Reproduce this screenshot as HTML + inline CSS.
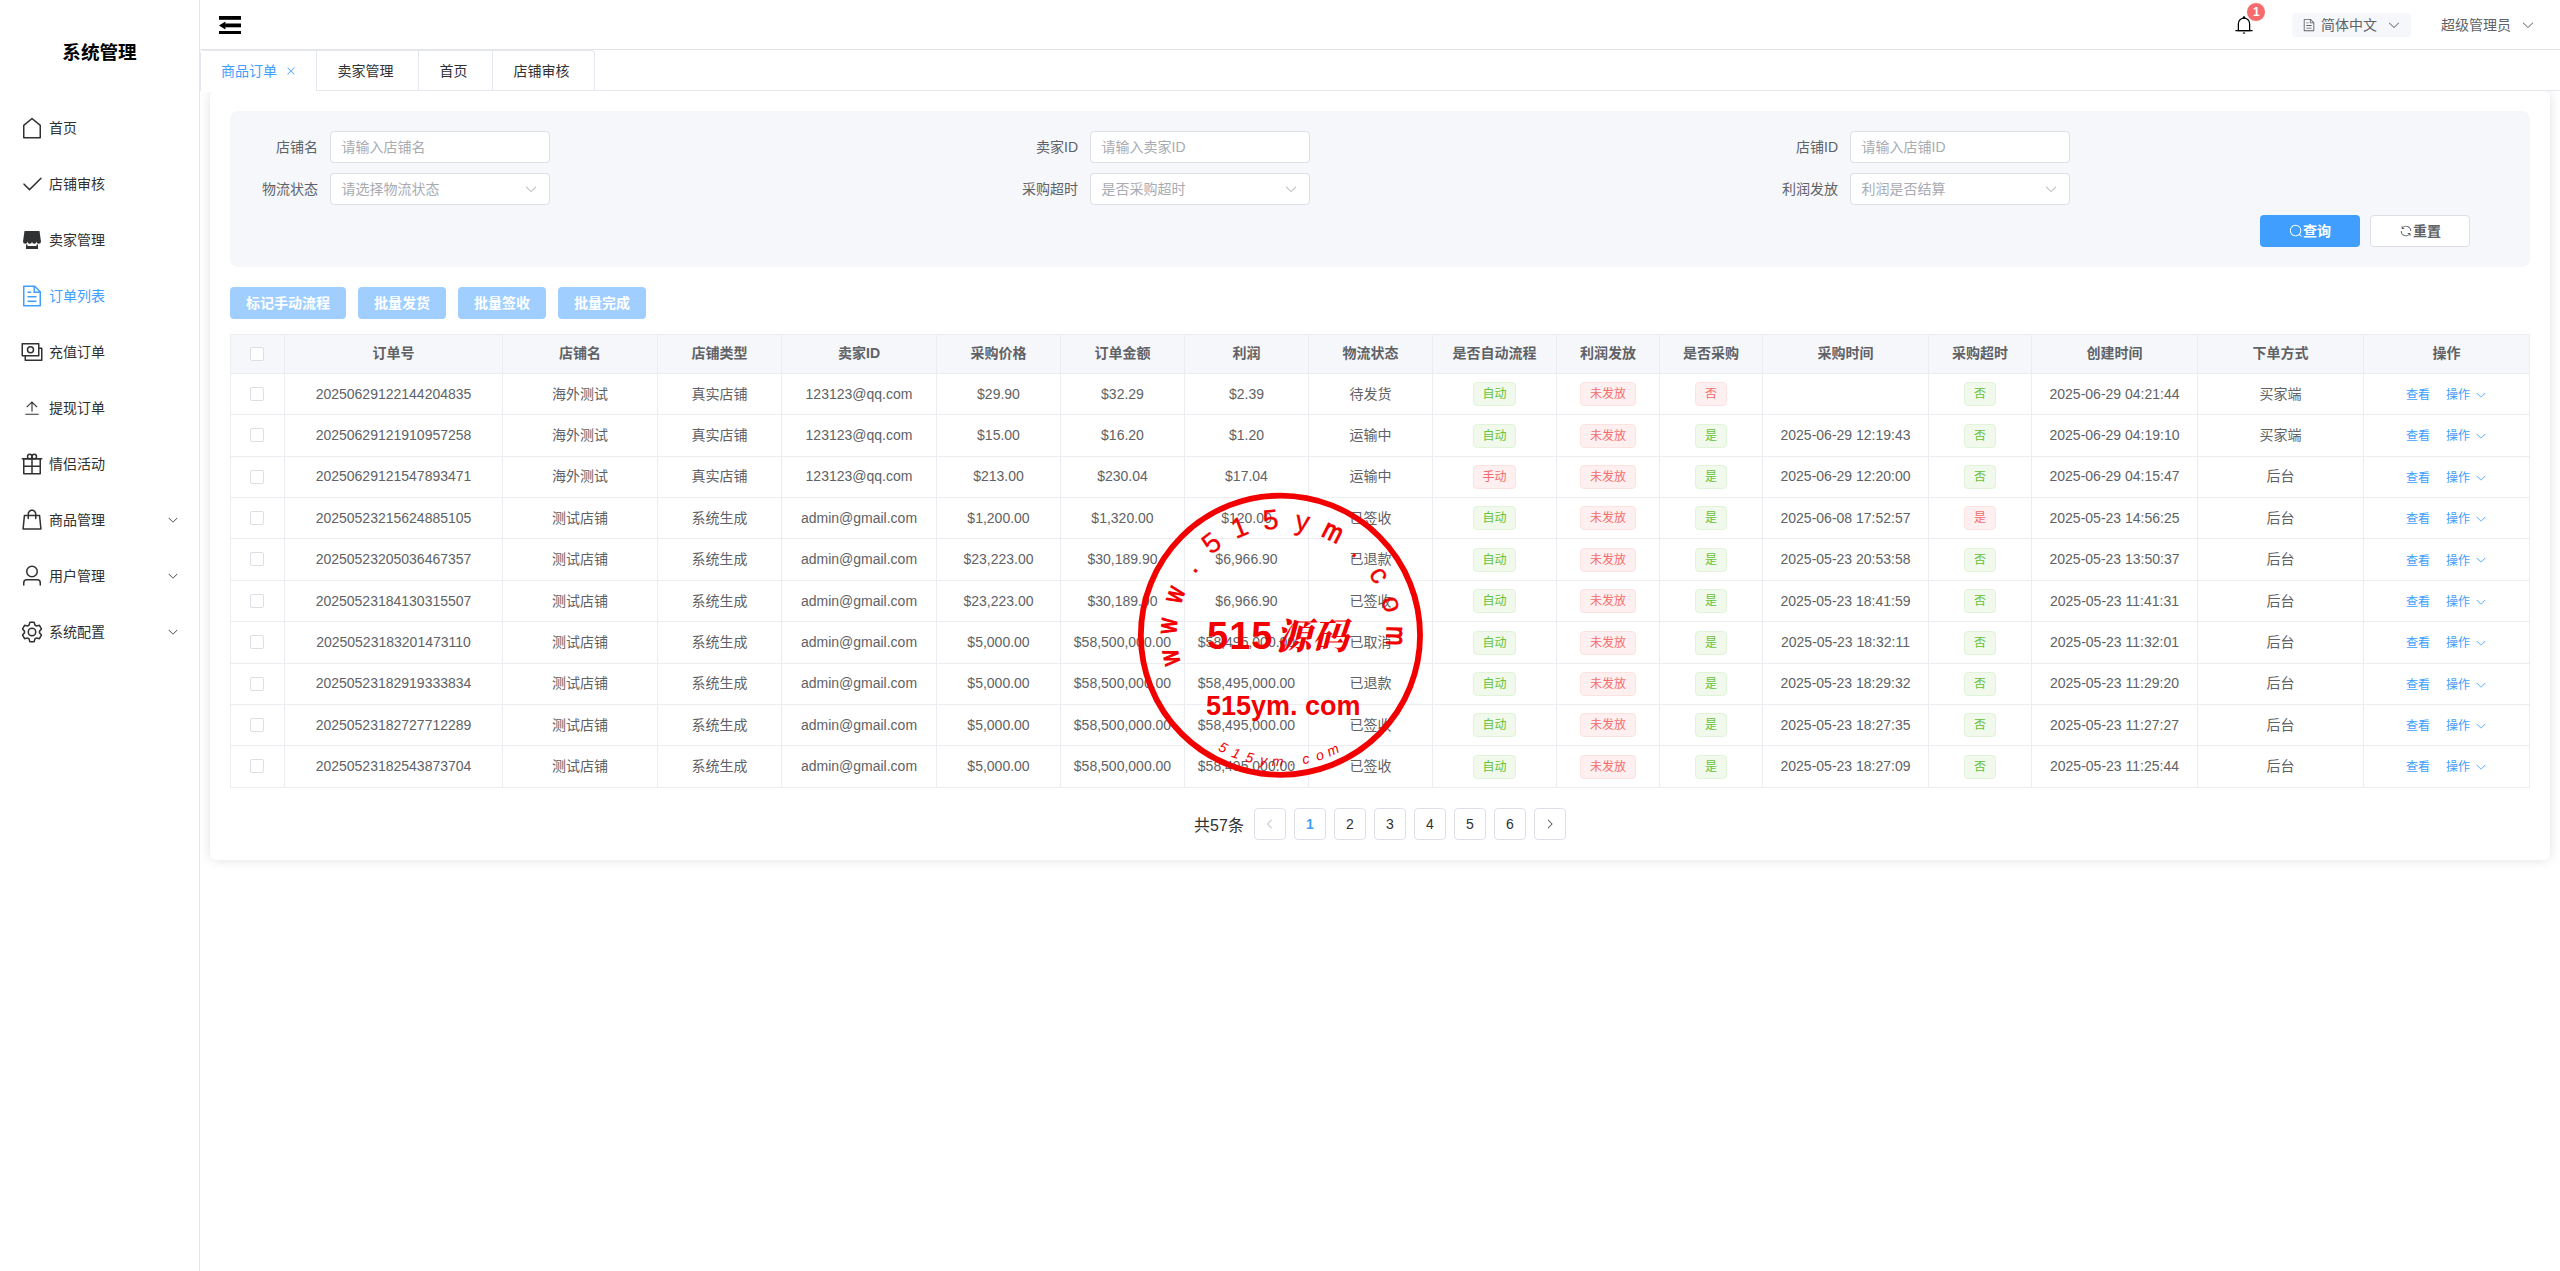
<!DOCTYPE html>
<html lang="zh-CN"><head><meta charset="utf-8"><title>系统管理</title>
<style>
*{box-sizing:border-box;margin:0;padding:0}
html,body{width:2560px;height:1271px;overflow:hidden;background:#fff}
body{position:relative;font-family:"Liberation Sans","Noto Sans CJK SC",sans-serif;font-size:14px;color:#303133}
.ic{fill:currentColor;display:inline-block;vertical-align:middle;flex:none}
/* sidebar */
.side{position:absolute;left:0;top:0;width:200px;height:1271px;border-right:1px solid #e6e6e6;z-index:3;background:#fff}
.logo{position:absolute;left:0;top:35px;width:199px;height:36px;line-height:36px;text-align:center;font-size:18.6px;font-weight:700;color:#000}
.mi{position:absolute;left:0;width:199px;height:56px;line-height:56px;color:#303133;font-size:14px}
.mi .mic{position:absolute;left:20px;top:16px}
.mi span{position:absolute;left:49px;top:0}
.mi .marr{position:absolute;left:167px;top:22px}
.mi.act{color:#409eff}
/* header */
.head{position:absolute;left:200px;top:0;width:2360px;height:50px;border-bottom:1px solid #e2e4e8;z-index:3;background:#fff}
.fold{position:absolute;left:18.6px;top:15.6px;width:22.6px;height:18.8px;fill:#000}
.bell{position:absolute;left:2033.8px;top:14.8px;width:20px;height:20px;color:#000}
.bell .ic{position:absolute;left:0;top:0}
.badge{position:absolute;left:12.5px;top:-12.8px;width:20px;height:20px;border-radius:10px;background:#f56c6c;border:1px solid #fff;color:#fff;font-size:12px;font-weight:700;line-height:18px;text-align:center}
.lang{position:absolute;left:2092px;top:13px;width:119px;height:24px;border-radius:4px;background:#f5f7fa;color:#606266;line-height:24px}
.lang .ldoc{position:absolute;left:10px;top:5px}
.lang span{position:absolute;left:29px;top:0}
.lang .larr{position:absolute;left:95px;top:5px}
.admin{position:absolute;left:2241px;top:13px;height:24px;line-height:24px;color:#606266}
.admin .aarr{position:absolute;left:80px;top:5px}
/* tabs */
.tabs{position:absolute;left:200px;top:50px;width:2360px;height:41px;border-bottom:1px solid #e4e7ed;background:#fff;z-index:2}
.tabwrap{position:absolute;left:0;top:0;height:41px;display:flex;border:1px solid #e4e7ed;border-bottom:none;border-radius:4px 4px 0 0}
.tab{height:40px;line-height:40px;padding:0 4px 0 0;text-align:center;border-left:1px solid #e4e7ed;color:#303133;font-size:14px;white-space:nowrap}
.tab:first-child{border-left:none}
.tab.on{color:#409eff;padding:0 0 0 20px;text-align:left;background:#fff;height:41px;border-bottom:1px solid #fff}
.tab .tclose{margin-left:8px;position:relative;top:-1px}
/* card */
.card{position:absolute;left:210px;top:91px;width:2340px;height:769px;background:#fff;border-radius:6px;box-shadow:0 0 12px rgba(0,0,0,.12)}
.filter{position:absolute;left:20px;top:20px;width:2300px;height:156px;background:#f5f7fa;border-radius:8px}
.lbl{position:absolute;width:130px;height:32px;line-height:32px;text-align:right;padding-right:12px;color:#606266;font-size:14px}
.inp{position:absolute;width:220px;height:32px;border:1px solid #dcdfe6;border-radius:4px;background:#fff;line-height:30px;padding-left:10.5px;color:#a8abb2;font-size:14px}
.inp .sarr{position:absolute;right:11px;top:8px;color:#a8abb2}
.btn{position:absolute;width:100px;height:32px;padding-bottom:2px;border-radius:4px;display:flex;align-items:center;justify-content:center;font-size:14px;font-weight:700}
.btn.pri{background:#409eff;color:#fff}
.btn.def{background:#fff;border:1px solid #dcdfe6;color:#606266}
.acts{position:absolute;left:20px;top:196px;height:32px}
.abtn{position:absolute;top:0;height:32px;line-height:32px;text-align:center;background:#a0cfff;color:#fff;border-radius:4px;font-size:14px;font-weight:700}
/* table */
.tb{position:absolute;left:20px;top:243px;width:2300px;table-layout:fixed;border-collapse:separate;border-spacing:0;border-top:1px solid #ebedf1;border-left:1px solid #ebedf1;font-size:14px;color:#606266}
.tb th,.tb td{line-height:23px;border-right:1px solid #ebedf1;border-bottom:1px solid #ebedf1;text-align:center;white-space:nowrap;overflow:hidden;padding:0}
.tb th{height:38.9px;background:#f5f7fa;color:#606266;font-weight:700}
.tb td{height:41.4px}
.cb{position:relative;left:-0.7px;top:-1px;display:inline-block;width:14px;height:14px;border:1px solid #dcdfe6;border-radius:2px;background:#fff;vertical-align:middle}
.tag{display:inline-block;height:24px;line-height:22px;padding:0 8.65px;font-size:12px;border-radius:4px;border:1px solid;vertical-align:middle}
.tag.g{background:#f0f9eb;border-color:#e1f3d8;color:#67c23a}
.tag.r{background:#fef0f0;border-color:#fde2e2;color:#f56c6c}
.lk{color:#409eff;font-size:12px;position:relative;top:0.9px;left:0}
.lk.l2{margin-left:16px}
.oparr{margin-left:5px;position:relative;top:-1px}
/* pagination */
.pg{position:absolute;left:0;top:717px;width:2340px;height:32px;display:flex;justify-content:center;align-items:center}
.tot{font-size:16px;color:#303133;margin-right:10px}
.pb{width:32px;height:32px;border:1px solid #dcdfe6;border-radius:4px;margin-right:8px;display:flex;align-items:center;justify-content:center;font-size:14px;color:#303133;background:#fff}
.pb:last-child{margin-right:0}
.pb.cur{color:#409eff;font-weight:700}
.pb.dis{color:#a8abb2}
.stamp{position:absolute;left:1130px;top:485px;width:300px;height:300px}

.btn .ic{position:relative;top:1px}
.mi .mic.small{left:23px;top:19px}

</style></head><body>
<div class="side"><div class="logo">系统管理</div><div class="mi" style="top:100px"><svg class="ic mic" style="width:24px;height:24px;" viewBox="0 0 1024 1024"><path d="M192 413.952V896h640V413.952L512 147.328 192 413.952zM139.52 374.4l352-293.312a32 32 0 0 1 40.96 0l352 293.312A32 32 0 0 1 896 398.976V928a32 32 0 0 1-32 32H160a32 32 0 0 1-32-32V398.976a32 32 0 0 1 11.52-24.576z"/></svg><span>首页</span></div><div class="mi" style="top:156px"><svg class="ic mic" style="width:24px;height:24px;" viewBox="0 0 1024 1024"><path d="M406.656 706.944 195.84 496.256a32 32 0 1 0-45.248 45.248l256 256 512-512a32 32 0 0 0-45.248-45.248L406.592 706.944z"/></svg><span>店铺审核</span></div><div class="mi" style="top:212px"><svg class="ic mic" style="width:24px;height:24px;" viewBox="0 0 1024 1024"><path d="M704 704h64v192H256V704h64v64h384v-64zm188.544-152.192C894.528 559.616 896 567.616 896 576a96 96 0 1 1-192 0 96 96 0 1 1-192 0 96 96 0 1 1-192 0 96 96 0 1 1-192 0c0-8.384 1.408-16.384 3.392-24.192L192 128h640l60.544 423.808z"/></svg><span>卖家管理</span></div><div class="mi act" style="top:268px"><svg class="ic mic" style="width:24px;height:24px;" viewBox="0 0 1024 1024"><path d="M832 384H576V128H192v768h640V384zm-26.496-64L640 154.496V320h165.504zM160 64h480l256 256v608a32 32 0 0 1-32 32H160a32 32 0 0 1-32-32V96a32 32 0 0 1 32-32zm160 448h384v64H320v-64zm0-192h160v64H320v-64zm0 384h384v64H320v-64z"/></svg><span>订单列表</span></div><div class="mi" style="top:324px"><svg class="ic mic" style="width:24px;height:24px;" viewBox="0 0 1024 1024"><path d="M256 640v192h640V384H768v-64h150.976c14.272 0 19.456 1.472 24.64 4.288a29.056 29.056 0 0 1 12.16 12.096c2.752 5.184 4.224 10.368 4.224 24.64v493.952c0 14.272-1.472 19.456-4.288 24.64a29.056 29.056 0 0 1-12.096 12.16c-5.184 2.752-10.368 4.224-24.64 4.224H233.024c-14.272 0-19.456-1.472-24.64-4.288a29.056 29.056 0 0 1-12.16-12.096c-2.688-5.184-4.224-10.368-4.224-24.576V640h64z"/><path d="M768 192H128v448h640V192zm64-22.976v493.952c0 14.272-1.472 19.456-4.288 24.64a29.056 29.056 0 0 1-12.096 12.16c-5.184 2.752-10.368 4.224-24.64 4.224H105.024c-14.272 0-19.456-1.472-24.64-4.288a29.056 29.056 0 0 1-12.16-12.096C65.536 682.432 64 677.248 64 663.04V169.024c0-14.272 1.472-19.456 4.288-24.64a29.056 29.056 0 0 1 12.096-12.16C85.568 129.536 90.752 128 104.96 128h685.952c14.272 0 19.456 1.472 24.64 4.288a29.056 29.056 0 0 1 12.16 12.096c2.752 5.184 4.224 10.368 4.224 24.64z"/><path d="M448 576a160 160 0 1 1 0-320 160 160 0 0 1 0 320zm0-64a96 96 0 1 0 0-192 96 96 0 0 0 0 192z"/></svg><span>充值订单</span></div><div class="mi" style="top:380px"><svg class="ic mic small" style="width:18px;height:18px;" viewBox="0 0 1024 1024"><path d="M160 832h704a32 32 0 1 1 0 64H160a32 32 0 1 1 0-64zm384-578.304V704h-64V247.296L237.248 490.048 192 444.8 508.8 128l316.8 316.8-45.312 45.248L544 253.696z"/></svg><span>提现订单</span></div><div class="mi" style="top:436px"><svg class="ic mic" style="width:24px;height:24px;" viewBox="0 0 1024 1024"><path d="M480 896V640H192v-64h288V320H192v576h288zm64 0h288V320H544v256h288v64H544v256zM128 256h768v672a32 32 0 0 1-32 32H160a32 32 0 0 1-32-32V256z"/><path d="M96 256h832q32 0 32 32t-32 32H96q-32 0-32-32t32-32z"/><path d="M416 256a64 64 0 1 0 0-128 64 64 0 0 0 0 128zm0 64a128 128 0 1 1 0-256 128 128 0 0 1 0 256z"/><path d="M608 256a64 64 0 1 0 0-128 64 64 0 0 0 0 128zm0 64a128 128 0 1 1 0-256 128 128 0 0 1 0 256z"/></svg><span>情侣活动</span></div><div class="mi" style="top:492px"><svg class="ic mic" style="width:24px;height:24px;" viewBox="0 0 1024 1024"><path d="M320 288v-22.336C320 154.688 405.504 64 512 64s192 90.688 192 201.664v22.4h131.072a32 32 0 0 1 31.808 28.8l57.6 576a32 32 0 0 1-31.808 35.2H131.328a32 32 0 0 1-31.808-35.2l57.6-576a32 32 0 0 1 31.808-28.8H320zm64 0h256v-22.336C640 189.248 582.272 128 512 128c-70.272 0-128 61.248-128 137.664v22.4zm-64 64H217.92l-51.2 512h690.56l-51.264-512H704v96a32 32 0 1 1-64 0v-96H384v96a32 32 0 0 1-64 0v-96z"/></svg><span>商品管理</span><svg class="ic marr" style="width:12px;height:12px;" viewBox="0 0 1024 1024"><path d="M831.872 340.864 512 652.672 192.128 340.864a30.592 30.592 0 0 0-42.752 0 29.12 29.12 0 0 0 0 41.6L489.664 714.24a32 32 0 0 0 44.672 0l340.288-331.712a29.12 29.12 0 0 0 0-41.728 30.592 30.592 0 0 0-42.752 0z"/></svg></div><div class="mi" style="top:548px"><svg class="ic mic" style="width:24px;height:24px;" viewBox="0 0 1024 1024"><path d="M512 512a192 192 0 1 0 0-384 192 192 0 0 0 0 384zm0 64a256 256 0 1 1 0-512 256 256 0 0 1 0 512zm320 320v-96a96 96 0 0 0-96-96H288a96 96 0 0 0-96 96v96a32 32 0 1 1-64 0v-96a160 160 0 0 1 160-160h448a160 160 0 0 1 160 160v96a32 32 0 1 1-64 0z"/></svg><span>用户管理</span><svg class="ic marr" style="width:12px;height:12px;" viewBox="0 0 1024 1024"><path d="M831.872 340.864 512 652.672 192.128 340.864a30.592 30.592 0 0 0-42.752 0 29.12 29.12 0 0 0 0 41.6L489.664 714.24a32 32 0 0 0 44.672 0l340.288-331.712a29.12 29.12 0 0 0 0-41.728 30.592 30.592 0 0 0-42.752 0z"/></svg></div><div class="mi" style="top:604px"><svg class="ic mic" style="width:24px;height:24px;" viewBox="0 0 1024 1024"><path d="M600.704 64a32 32 0 0 1 30.464 22.208l35.2 109.376c14.784 7.232 28.928 15.36 42.432 24.512l112.384-24.192a32 32 0 0 1 34.432 15.36L944.32 364.8a32 32 0 0 1-4.032 37.504l-77.12 85.12a357.12 357.12 0 0 1 0 49.024l77.12 85.248a32 32 0 0 1 4.032 37.504l-88.704 153.6a32 32 0 0 1-34.432 15.296L708.8 803.904c-13.44 9.088-27.648 17.28-42.368 24.512l-35.264 109.376A32 32 0 0 1 600.704 960H423.296a32 32 0 0 1-30.464-22.208L357.696 828.48a351.616 351.616 0 0 1-42.56-24.64l-112.32 24.256a32 32 0 0 1-34.432-15.36L79.68 659.2a32 32 0 0 1 4.032-37.504l77.12-85.248a357.12 357.12 0 0 1 0-48.896l-77.12-85.248A32 32 0 0 1 79.68 364.8l88.704-153.6a32 32 0 0 1 34.432-15.296l112.32 24.256c13.568-9.152 27.776-17.408 42.56-24.64l35.2-109.312A32 32 0 0 1 423.232 64H600.64zm-23.424 64H446.72l-36.352 113.088-24.512 11.968a294.113 294.113 0 0 0-34.816 20.096l-22.656 15.36-116.224-25.088-65.28 113.152 79.68 88.192-1.92 27.136a293.12 293.12 0 0 0 0 40.192l1.92 27.136-79.808 88.192 65.344 113.152 116.224-25.024 22.656 15.296a294.113 294.113 0 0 0 34.816 20.096l24.512 11.968L446.72 896h130.688l36.48-113.152 24.448-11.904a288.282 288.282 0 0 0 34.752-20.096l22.592-15.296 116.288 25.024 65.28-113.152-79.744-88.192 1.92-27.136a293.12 293.12 0 0 0 0-40.256l-1.92-27.136 79.808-88.128-65.344-113.152-116.288 24.96-22.592-15.232a287.616 287.616 0 0 0-34.752-20.096l-24.448-11.904L577.344 128zM512 320a192 192 0 1 1 0 384 192 192 0 0 1 0-384zm0 64a128 128 0 1 0 0 256 128 128 0 0 0 0-256z"/></svg><span>系统配置</span><svg class="ic marr" style="width:12px;height:12px;" viewBox="0 0 1024 1024"><path d="M831.872 340.864 512 652.672 192.128 340.864a30.592 30.592 0 0 0-42.752 0 29.12 29.12 0 0 0 0 41.6L489.664 714.24a32 32 0 0 0 44.672 0l340.288-331.712a29.12 29.12 0 0 0 0-41.728 30.592 30.592 0 0 0-42.752 0z"/></svg></div></div>
<div class="head">
<svg class="fold" viewBox="0 0 226 188"><rect x="0" y="0" width="226" height="38"/><rect x="61" y="75" width="165" height="38"/><rect x="0" y="150" width="226" height="38"/><path d="M0 94 L64 54 L64 134 Z"/></svg>
<div class="bell"><svg class="ic " style="width:20px;height:20px;" viewBox="0 0 1024 1024"><path d="M512 64a64 64 0 0 1 64 64v64H448v-64a64 64 0 0 1 64-64z"/><path d="M256 768h512V448a256 256 0 1 0-512 0v320zm256-640a320 320 0 0 1 320 320v384H192V448a320 320 0 0 1 320-320z"/><path d="M96 768h832q32 0 32 32t-32 32H96q-32 0-32-32t32-32zm352 128h128a64 64 0 0 1-128 0z"/></svg><span class="badge">1</span></div>
<div class="lang"><svg class="ic ldoc" style="width:14px;height:14px;" viewBox="0 0 1024 1024"><path d="M832 384H576V128H192v768h640V384zm-26.496-64L640 154.496V320h165.504zM160 64h480l256 256v608a32 32 0 0 1-32 32H160a32 32 0 0 1-32-32V96a32 32 0 0 1 32-32zm160 448h384v64H320v-64zm0-192h160v64H320v-64zm0 384h384v64H320v-64z"/></svg><span>简体中文</span><svg class="ic larr" style="width:14px;height:14px;" viewBox="0 0 1024 1024"><path d="M831.872 340.864 512 652.672 192.128 340.864a30.592 30.592 0 0 0-42.752 0 29.12 29.12 0 0 0 0 41.6L489.664 714.24a32 32 0 0 0 44.672 0l340.288-331.712a29.12 29.12 0 0 0 0-41.728 30.592 30.592 0 0 0-42.752 0z"/></svg></div>
<div class="admin"><span>超级管理员</span><svg class="ic aarr" style="width:14px;height:14px;" viewBox="0 0 1024 1024"><path d="M831.872 340.864 512 652.672 192.128 340.864a30.592 30.592 0 0 0-42.752 0 29.12 29.12 0 0 0 0 41.6L489.664 714.24a32 32 0 0 0 44.672 0l340.288-331.712a29.12 29.12 0 0 0 0-41.728 30.592 30.592 0 0 0-42.752 0z"/></svg></div>
</div>
<div class="tabs"><div class="tabwrap">
<div class="tab on" style="width:115px"><span>商品订单</span><svg class="ic tclose" style="width:12px;height:12px;" viewBox="0 0 1024 1024"><path d="M764.288 214.592 512 466.88 259.712 214.592a31.936 31.936 0 0 0-45.12 45.12L466.752 512 214.528 764.224a31.936 31.936 0 1 0 45.12 45.184L512 557.184l252.288 252.288a31.936 31.936 0 0 0 45.12-45.12L557.12 512.064l252.288-252.352a31.936 31.936 0 1 0-45.12-45.184z"/></svg></div><div class="tab" style="width:102px">卖家管理</div><div class="tab" style="width:74px">首页</div><div class="tab" style="width:102px">店铺审核</div>
</div></div>
<div class="card">
<div class="filter"><div class="lbl" style="left:-30px;top:20px">店铺名</div><div class="inp" style="left:100px;top:20px"><span>请输入店铺名</span></div><div class="lbl" style="left:730px;top:20px">卖家ID</div><div class="inp" style="left:860px;top:20px"><span>请输入卖家ID</span></div><div class="lbl" style="left:1490px;top:20px">店铺ID</div><div class="inp" style="left:1620px;top:20px"><span>请输入店铺ID</span></div><div class="lbl" style="left:-30px;top:62px">物流状态</div><div class="inp" style="left:100px;top:62px"><span>请选择物流状态</span><svg class="ic sarr" style="width:14px;height:14px;" viewBox="0 0 1024 1024"><path d="M831.872 340.864 512 652.672 192.128 340.864a30.592 30.592 0 0 0-42.752 0 29.12 29.12 0 0 0 0 41.6L489.664 714.24a32 32 0 0 0 44.672 0l340.288-331.712a29.12 29.12 0 0 0 0-41.728 30.592 30.592 0 0 0-42.752 0z"/></svg></div><div class="lbl" style="left:730px;top:62px">采购超时</div><div class="inp" style="left:860px;top:62px"><span>是否采购超时</span><svg class="ic sarr" style="width:14px;height:14px;" viewBox="0 0 1024 1024"><path d="M831.872 340.864 512 652.672 192.128 340.864a30.592 30.592 0 0 0-42.752 0 29.12 29.12 0 0 0 0 41.6L489.664 714.24a32 32 0 0 0 44.672 0l340.288-331.712a29.12 29.12 0 0 0 0-41.728 30.592 30.592 0 0 0-42.752 0z"/></svg></div><div class="lbl" style="left:1490px;top:62px">利润发放</div><div class="inp" style="left:1620px;top:62px"><span>利润是否结算</span><svg class="ic sarr" style="width:14px;height:14px;" viewBox="0 0 1024 1024"><path d="M831.872 340.864 512 652.672 192.128 340.864a30.592 30.592 0 0 0-42.752 0 29.12 29.12 0 0 0 0 41.6L489.664 714.24a32 32 0 0 0 44.672 0l340.288-331.712a29.12 29.12 0 0 0 0-41.728 30.592 30.592 0 0 0-42.752 0z"/></svg></div><div class="btn pri" style="left:2030px;top:104px"><svg class="ic " style="width:14px;height:14px;" viewBox="0 0 1024 1024"><path d="m795.904 750.72 124.992 124.928a32 32 0 0 1-45.248 45.248L750.656 795.904a416 416 0 1 1 45.248-45.248zM480 832a352 352 0 1 0 0-704 352 352 0 0 0 0 704z"/></svg><span>查询</span></div><div class="btn def" style="left:2140px;top:104px"><svg class="ic " style="width:14px;height:14px;" viewBox="0 0 1024 1024"><path d="M771.776 794.88A384 384 0 0 1 128 512h64a320 320 0 0 0 555.712 216.448H654.72a32 32 0 1 1 0-64h149.056a32 32 0 0 1 32 32v148.928a32 32 0 1 1-64 0v-50.56zM276.288 295.616h92.992a32 32 0 0 1 0 64H220.16a32 32 0 0 1-32-32V178.56a32 32 0 0 1 64 0v50.56A384 384 0 0 1 896.128 512h-64a320 320 0 0 0-555.776-216.384z"/></svg><span>重置</span></div></div>
<div class="acts"><div class="abtn" style="left:0px;width:116px">标记手动流程</div><div class="abtn" style="left:128px;width:88px">批量发货</div><div class="abtn" style="left:228px;width:88px">批量签收</div><div class="abtn" style="left:328px;width:88px">批量完成</div></div>
<table class="tb"><colgroup><col style="width:54px"><col style="width:218px"><col style="width:155px"><col style="width:124px"><col style="width:155px"><col style="width:124px"><col style="width:124px"><col style="width:124px"><col style="width:124px"><col style="width:124px"><col style="width:103px"><col style="width:103px"><col style="width:166px"><col style="width:103px"><col style="width:166px"><col style="width:166px"><col style="width:166px"></colgroup><thead><tr><th><i class="cb"></i></th><th>订单号</th><th>店铺名</th><th>店铺类型</th><th>卖家ID</th><th>采购价格</th><th>订单金额</th><th>利润</th><th>物流状态</th><th>是否自动流程</th><th>利润发放</th><th>是否采购</th><th>采购时间</th><th>采购超时</th><th>创建时间</th><th>下单方式</th><th>操作</th></tr></thead><tbody><tr><td><i class="cb"></i></td><td>20250629122144204835</td><td>海外测试</td><td>真实店铺</td><td>123123@qq.com</td><td>$29.90</td><td>$32.29</td><td>$2.39</td><td>待发货</td><td><span class="tag g">自动</span></td><td><span class="tag r">未发放</span></td><td><span class="tag r">否</span></td><td></td><td><span class="tag g">否</span></td><td>2025-06-29 04:21:44</td><td>买家端</td><td class="op"><span class="lk">查看</span><span class="lk l2">操作<svg class="ic oparr" style="width:12px;height:12px;" viewBox="0 0 1024 1024"><path d="M831.872 340.864 512 652.672 192.128 340.864a30.592 30.592 0 0 0-42.752 0 29.12 29.12 0 0 0 0 41.6L489.664 714.24a32 32 0 0 0 44.672 0l340.288-331.712a29.12 29.12 0 0 0 0-41.728 30.592 30.592 0 0 0-42.752 0z"/></svg></span></td></tr><tr><td><i class="cb"></i></td><td>20250629121910957258</td><td>海外测试</td><td>真实店铺</td><td>123123@qq.com</td><td>$15.00</td><td>$16.20</td><td>$1.20</td><td>运输中</td><td><span class="tag g">自动</span></td><td><span class="tag r">未发放</span></td><td><span class="tag g">是</span></td><td>2025-06-29 12:19:43</td><td><span class="tag g">否</span></td><td>2025-06-29 04:19:10</td><td>买家端</td><td class="op"><span class="lk">查看</span><span class="lk l2">操作<svg class="ic oparr" style="width:12px;height:12px;" viewBox="0 0 1024 1024"><path d="M831.872 340.864 512 652.672 192.128 340.864a30.592 30.592 0 0 0-42.752 0 29.12 29.12 0 0 0 0 41.6L489.664 714.24a32 32 0 0 0 44.672 0l340.288-331.712a29.12 29.12 0 0 0 0-41.728 30.592 30.592 0 0 0-42.752 0z"/></svg></span></td></tr><tr><td><i class="cb"></i></td><td>20250629121547893471</td><td>海外测试</td><td>真实店铺</td><td>123123@qq.com</td><td>$213.00</td><td>$230.04</td><td>$17.04</td><td>运输中</td><td><span class="tag r">手动</span></td><td><span class="tag r">未发放</span></td><td><span class="tag g">是</span></td><td>2025-06-29 12:20:00</td><td><span class="tag g">否</span></td><td>2025-06-29 04:15:47</td><td>后台</td><td class="op"><span class="lk">查看</span><span class="lk l2">操作<svg class="ic oparr" style="width:12px;height:12px;" viewBox="0 0 1024 1024"><path d="M831.872 340.864 512 652.672 192.128 340.864a30.592 30.592 0 0 0-42.752 0 29.12 29.12 0 0 0 0 41.6L489.664 714.24a32 32 0 0 0 44.672 0l340.288-331.712a29.12 29.12 0 0 0 0-41.728 30.592 30.592 0 0 0-42.752 0z"/></svg></span></td></tr><tr><td><i class="cb"></i></td><td>20250523215624885105</td><td>测试店铺</td><td>系统生成</td><td>admin@gmail.com</td><td>$1,200.00</td><td>$1,320.00</td><td>$120.00</td><td>已签收</td><td><span class="tag g">自动</span></td><td><span class="tag r">未发放</span></td><td><span class="tag g">是</span></td><td>2025-06-08 17:52:57</td><td><span class="tag r">是</span></td><td>2025-05-23 14:56:25</td><td>后台</td><td class="op"><span class="lk">查看</span><span class="lk l2">操作<svg class="ic oparr" style="width:12px;height:12px;" viewBox="0 0 1024 1024"><path d="M831.872 340.864 512 652.672 192.128 340.864a30.592 30.592 0 0 0-42.752 0 29.12 29.12 0 0 0 0 41.6L489.664 714.24a32 32 0 0 0 44.672 0l340.288-331.712a29.12 29.12 0 0 0 0-41.728 30.592 30.592 0 0 0-42.752 0z"/></svg></span></td></tr><tr><td><i class="cb"></i></td><td>20250523205036467357</td><td>测试店铺</td><td>系统生成</td><td>admin@gmail.com</td><td>$23,223.00</td><td>$30,189.90</td><td>$6,966.90</td><td>已退款</td><td><span class="tag g">自动</span></td><td><span class="tag r">未发放</span></td><td><span class="tag g">是</span></td><td>2025-05-23 20:53:58</td><td><span class="tag g">否</span></td><td>2025-05-23 13:50:37</td><td>后台</td><td class="op"><span class="lk">查看</span><span class="lk l2">操作<svg class="ic oparr" style="width:12px;height:12px;" viewBox="0 0 1024 1024"><path d="M831.872 340.864 512 652.672 192.128 340.864a30.592 30.592 0 0 0-42.752 0 29.12 29.12 0 0 0 0 41.6L489.664 714.24a32 32 0 0 0 44.672 0l340.288-331.712a29.12 29.12 0 0 0 0-41.728 30.592 30.592 0 0 0-42.752 0z"/></svg></span></td></tr><tr><td><i class="cb"></i></td><td>20250523184130315507</td><td>测试店铺</td><td>系统生成</td><td>admin@gmail.com</td><td>$23,223.00</td><td>$30,189.90</td><td>$6,966.90</td><td>已签收</td><td><span class="tag g">自动</span></td><td><span class="tag r">未发放</span></td><td><span class="tag g">是</span></td><td>2025-05-23 18:41:59</td><td><span class="tag g">否</span></td><td>2025-05-23 11:41:31</td><td>后台</td><td class="op"><span class="lk">查看</span><span class="lk l2">操作<svg class="ic oparr" style="width:12px;height:12px;" viewBox="0 0 1024 1024"><path d="M831.872 340.864 512 652.672 192.128 340.864a30.592 30.592 0 0 0-42.752 0 29.12 29.12 0 0 0 0 41.6L489.664 714.24a32 32 0 0 0 44.672 0l340.288-331.712a29.12 29.12 0 0 0 0-41.728 30.592 30.592 0 0 0-42.752 0z"/></svg></span></td></tr><tr><td><i class="cb"></i></td><td>20250523183201473110</td><td>测试店铺</td><td>系统生成</td><td>admin@gmail.com</td><td>$5,000.00</td><td>$58,500,000.00</td><td>$58,495,000.00</td><td>已取消</td><td><span class="tag g">自动</span></td><td><span class="tag r">未发放</span></td><td><span class="tag g">是</span></td><td>2025-05-23 18:32:11</td><td><span class="tag g">否</span></td><td>2025-05-23 11:32:01</td><td>后台</td><td class="op"><span class="lk">查看</span><span class="lk l2">操作<svg class="ic oparr" style="width:12px;height:12px;" viewBox="0 0 1024 1024"><path d="M831.872 340.864 512 652.672 192.128 340.864a30.592 30.592 0 0 0-42.752 0 29.12 29.12 0 0 0 0 41.6L489.664 714.24a32 32 0 0 0 44.672 0l340.288-331.712a29.12 29.12 0 0 0 0-41.728 30.592 30.592 0 0 0-42.752 0z"/></svg></span></td></tr><tr><td><i class="cb"></i></td><td>20250523182919333834</td><td>测试店铺</td><td>系统生成</td><td>admin@gmail.com</td><td>$5,000.00</td><td>$58,500,000.00</td><td>$58,495,000.00</td><td>已退款</td><td><span class="tag g">自动</span></td><td><span class="tag r">未发放</span></td><td><span class="tag g">是</span></td><td>2025-05-23 18:29:32</td><td><span class="tag g">否</span></td><td>2025-05-23 11:29:20</td><td>后台</td><td class="op"><span class="lk">查看</span><span class="lk l2">操作<svg class="ic oparr" style="width:12px;height:12px;" viewBox="0 0 1024 1024"><path d="M831.872 340.864 512 652.672 192.128 340.864a30.592 30.592 0 0 0-42.752 0 29.12 29.12 0 0 0 0 41.6L489.664 714.24a32 32 0 0 0 44.672 0l340.288-331.712a29.12 29.12 0 0 0 0-41.728 30.592 30.592 0 0 0-42.752 0z"/></svg></span></td></tr><tr><td><i class="cb"></i></td><td>20250523182727712289</td><td>测试店铺</td><td>系统生成</td><td>admin@gmail.com</td><td>$5,000.00</td><td>$58,500,000.00</td><td>$58,495,000.00</td><td>已签收</td><td><span class="tag g">自动</span></td><td><span class="tag r">未发放</span></td><td><span class="tag g">是</span></td><td>2025-05-23 18:27:35</td><td><span class="tag g">否</span></td><td>2025-05-23 11:27:27</td><td>后台</td><td class="op"><span class="lk">查看</span><span class="lk l2">操作<svg class="ic oparr" style="width:12px;height:12px;" viewBox="0 0 1024 1024"><path d="M831.872 340.864 512 652.672 192.128 340.864a30.592 30.592 0 0 0-42.752 0 29.12 29.12 0 0 0 0 41.6L489.664 714.24a32 32 0 0 0 44.672 0l340.288-331.712a29.12 29.12 0 0 0 0-41.728 30.592 30.592 0 0 0-42.752 0z"/></svg></span></td></tr><tr><td><i class="cb"></i></td><td>20250523182543873704</td><td>测试店铺</td><td>系统生成</td><td>admin@gmail.com</td><td>$5,000.00</td><td>$58,500,000.00</td><td>$58,495,000.00</td><td>已签收</td><td><span class="tag g">自动</span></td><td><span class="tag r">未发放</span></td><td><span class="tag g">是</span></td><td>2025-05-23 18:27:09</td><td><span class="tag g">否</span></td><td>2025-05-23 11:25:44</td><td>后台</td><td class="op"><span class="lk">查看</span><span class="lk l2">操作<svg class="ic oparr" style="width:12px;height:12px;" viewBox="0 0 1024 1024"><path d="M831.872 340.864 512 652.672 192.128 340.864a30.592 30.592 0 0 0-42.752 0 29.12 29.12 0 0 0 0 41.6L489.664 714.24a32 32 0 0 0 44.672 0l340.288-331.712a29.12 29.12 0 0 0 0-41.728 30.592 30.592 0 0 0-42.752 0z"/></svg></span></td></tr></tbody></table>
<div class="pg"><span class="tot">共57条</span><div class="pb dis"><svg class="ic " style="width:12px;height:12px;" viewBox="0 0 1024 1024"><path d="M609.408 149.376 277.76 489.6a32 32 0 0 0 0 44.672l331.648 340.352a29.12 29.12 0 0 0 41.728 0 30.592 30.592 0 0 0 0-42.752L339.264 511.936l311.872-319.872a30.592 30.592 0 0 0 0-42.688 29.12 29.12 0 0 0-41.728 0z"/></svg></div><div class="pb cur">1</div><div class="pb">2</div><div class="pb">3</div><div class="pb">4</div><div class="pb">5</div><div class="pb">6</div><div class="pb"><svg class="ic " style="width:12px;height:12px;" viewBox="0 0 1024 1024"><path d="M340.864 149.312a30.592 30.592 0 0 0 0 42.752L652.736 512 340.864 831.872a30.592 30.592 0 0 0 0 42.752 29.12 29.12 0 0 0 41.728 0L714.24 534.336a32 32 0 0 0 0-44.672L382.592 149.376a29.12 29.12 0 0 0-41.728 0z"/></svg></div></div>
</div>
<svg class="stamp" viewBox="0 0 300 300" font-family="Liberation Sans, Noto Sans CJK SC, sans-serif" fill="#f20000">
<circle cx="150.45" cy="150.20" r="139.6" fill="none" stroke="#f20000" stroke-width="5.8"/>
<text x="48.7" y="170.9" transform="rotate(-102.0 48.7 170.9)" font-size="28" stroke="#f20000" stroke-width="1.3" text-anchor="middle" textLength="15" lengthAdjust="spacingAndGlyphs">w</text>
<text x="46.6" y="141.5" transform="rotate(-85.9 46.6 141.5)" font-size="28" stroke="#f20000" stroke-width="1.3" text-anchor="middle" textLength="15" lengthAdjust="spacingAndGlyphs">w</text>
<text x="52.8" y="112.7" transform="rotate(-69.8 52.8 112.7)" font-size="28" stroke="#f20000" stroke-width="1.3" text-anchor="middle" textLength="15" lengthAdjust="spacingAndGlyphs">w</text>
<text x="66.7" y="86.7" transform="rotate(-53.8 66.7 86.7)" font-size="28" stroke="#f20000" stroke-width="0.3" text-anchor="middle">.</text>
<text x="87.3" y="65.6" transform="rotate(-37.7 87.3 65.6)" font-size="28" stroke="#f20000" stroke-width="0.3" text-anchor="middle">5</text>
<text x="112.9" y="51.1" transform="rotate(-21.6 112.9 51.1)" font-size="28" stroke="#f20000" stroke-width="0.3" text-anchor="middle">1</text>
<text x="141.6" y="44.2" transform="rotate(-5.5 141.6 44.2)" font-size="28" stroke="#f20000" stroke-width="0.3" text-anchor="middle">5</text>
<text x="171.0" y="45.5" transform="rotate(10.6 171.0 45.5)" font-size="28" stroke="#f20000" stroke-width="0.3" text-anchor="middle">y</text>
<text x="198.9" y="54.9" transform="rotate(26.7 198.9 54.9)" font-size="28" stroke="#f20000" stroke-width="1.2" text-anchor="middle" textLength="19" lengthAdjust="spacingAndGlyphs">m</text>
<text x="223.1" y="71.7" transform="rotate(42.8 223.1 71.7)" font-size="28" stroke="#f20000" stroke-width="0.3" text-anchor="middle">.</text>
<text x="241.8" y="94.5" transform="rotate(58.8 241.8 94.5)" font-size="28" stroke="#f20000" stroke-width="0.3" text-anchor="middle">c</text>
<text x="253.3" y="121.6" transform="rotate(74.9 253.3 121.6)" font-size="28" stroke="#f20000" stroke-width="0.3" text-anchor="middle">o</text>
<text x="256.9" y="150.8" transform="rotate(91.0 256.9 150.8)" font-size="28" stroke="#f20000" stroke-width="1.2" text-anchor="middle" textLength="19" lengthAdjust="spacingAndGlyphs">m</text>
<text x="91.0" y="266.9" transform="rotate(27.0 91.0 266.9)" font-size="14" font-style="italic" text-anchor="middle">5</text>
<text x="104.4" y="272.9" transform="rotate(20.6 104.4 272.9)" font-size="14" font-style="italic" text-anchor="middle">1</text>
<text x="118.5" y="277.2" transform="rotate(14.1 118.5 277.2)" font-size="14" font-style="italic" text-anchor="middle">5</text>
<text x="132.9" y="280.0" transform="rotate(7.7 132.9 280.0)" font-size="14" font-style="italic" text-anchor="middle">y</text>
<text x="147.6" y="281.2" transform="rotate(1.2 147.6 281.2)" font-size="14" font-style="italic" text-anchor="middle">m</text>
<text x="162.3" y="280.7" transform="rotate(-5.2 162.3 280.7)" font-size="14" font-style="italic" text-anchor="middle">.</text>
<text x="176.8" y="278.5" transform="rotate(-11.6 176.8 278.5)" font-size="14" font-style="italic" text-anchor="middle">c</text>
<text x="191.1" y="274.7" transform="rotate(-18.1 191.1 274.7)" font-size="14" font-style="italic" text-anchor="middle">o</text>
<text x="204.8" y="269.4" transform="rotate(-24.5 204.8 269.4)" font-size="14" font-style="italic" text-anchor="middle">m</text>
<text x="77" y="163.5" font-size="38" font-weight="700" letter-spacing="1">515<tspan font-family="Noto Serif CJK SC, serif" font-weight="900" font-size="36" font-style="italic" dx="2">源码</tspan></text>
<text x="76" y="230" font-size="27" font-weight="700">515ym. com</text>
</svg>
</body></html>
